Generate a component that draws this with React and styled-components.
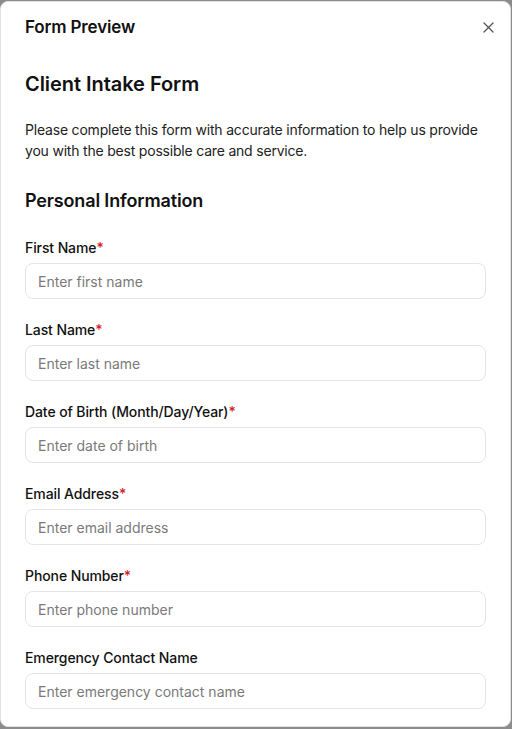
import React from 'react'
import styled, { createGlobalStyle } from 'styled-components'

const GlobalStyle = createGlobalStyle`
    * {
        box-sizing: border-box;
    }
    body {
        margin: 0;
        background: #8c8c8c;
        font-family: Inter, "Noto Sans", sans-serif;
        color: #111;
    }
`

const Backdrop = styled.div`
    height: 729px;
    padding: 1px 1px 2px 0;
    overflow: hidden;
`

const Modal = styled.div`
    height: 100%;
    background: #fff;
    border: 1px solid #e2e2e2;
    border-radius: 8px;
    overflow: hidden;
    display: flex;
    flex-direction: column;
`

const Header = styled.div`
    display: flex;
    justify-content: space-between;
    align-items: center;
    padding: 14px 14px 0 24px;
    height: 36px;
`

const HeaderTitle = styled.h2`
    margin: 0;
    font-size: 17px;
    font-weight: 600;
    letter-spacing: -0.15px;
`

const CloseButton = styled.button`
    border: none;
    background: none;
    padding: 0;
    width: 16px;
    height: 16px;
    display: flex;
    align-items: center;
    justify-content: center;
    color: #555;
    cursor: pointer;
`

const Body = styled.div`
    padding: 32px 24px 0 24px;
`

const FormTitle = styled.h1`
    margin: 0;
    font-size: 20px;
    font-weight: 600;
    line-height: 28px;
    letter-spacing: -0.05px;
`

const Intro = styled.p`
    margin: 21px 0 0 0;
    font-size: 14px;
    line-height: 21px;
    letter-spacing: -0.2px;
    color: #222;
`

const SectionTitle = styled.h3`
    margin: 27px 0 0 0;
    font-size: 18px;
    font-weight: 600;
    line-height: 26px;
    letter-spacing: -0.15px;
`

const Fields = styled.div`
    margin-top: 24px;
    display: flex;
    flex-direction: column;
    gap: 21px;
`

const Field = styled.div`
    display: flex;
    flex-direction: column;
    gap: 5px;
`

const Label = styled.label`
    font-size: 14px;
    font-weight: 500;
    line-height: 20px;
    letter-spacing: -0.1px;
    color: #111;
`

const Required = styled.span`
    color: #d3202e;
`

const Input = styled.input`
    height: 36px;
    width: 100%;
    border: 1px solid #e4e4e4;
    border-radius: 8px;
    padding: 0 12px;
    font-family: inherit;
    font-size: 14px;
    color: #111;
    outline: none;
    &::placeholder {
        color: #7a7a7a;
    }
`

const fields = [
    { label: 'First Name', placeholder: 'Enter first name', required: true },
    { label: 'Last Name', placeholder: 'Enter last name', required: true },
    { label: 'Date of Birth (Month/Day/Year)', placeholder: 'Enter date of birth', required: true },
    { label: 'Email Address', placeholder: 'Enter email address', required: true },
    { label: 'Phone Number', placeholder: 'Enter phone number', required: true },
    { label: 'Emergency Contact Name', placeholder: 'Enter emergency contact name', required: false },
]

const App = () => {
    return (
        <>
            <GlobalStyle />
            <Backdrop>
                <Modal>
                    <Header>
                        <HeaderTitle>Form Preview</HeaderTitle>
                        <CloseButton aria-label="Close">
                            <svg width="11" height="11" viewBox="0 0 11 11" fill="none">
                                <path d="M1 1L10 10M10 1L1 10" stroke="currentColor" strokeWidth="1.3" strokeLinecap="round" />
                            </svg>
                        </CloseButton>
                    </Header>
                    <Body>
                        <FormTitle>Client Intake Form</FormTitle>
                        <Intro>
                            Please complete this form with accurate information to help us provide
                            you with the best possible care and service.
                        </Intro>
                        <SectionTitle>Personal Information</SectionTitle>
                        <Fields>
                            {fields.map((f) => (
                                <Field key={f.label}>
                                    <Label>
                                        {f.label}
                                        {f.required && <Required>*</Required>}
                                    </Label>
                                    <Input placeholder={f.placeholder} />
                                </Field>
                            ))}
                        </Fields>
                    </Body>
                </Modal>
            </Backdrop>
        </>
    )
}

export default App
